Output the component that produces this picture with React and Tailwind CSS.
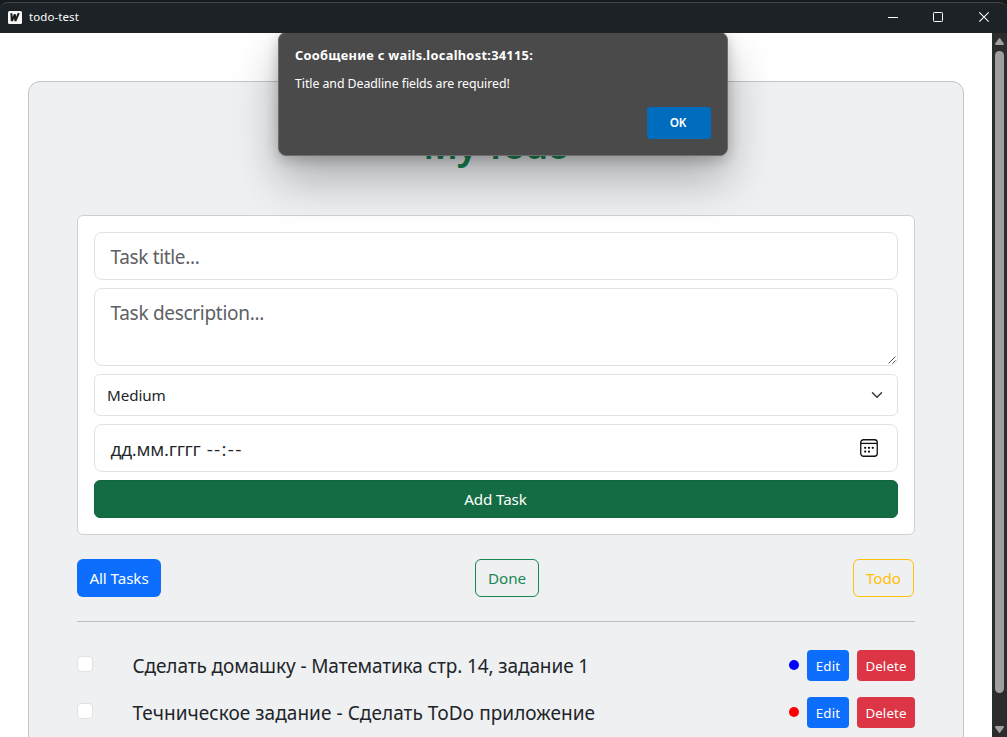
import React from "react";

const tasks = [
  { text: "Сделать домашку - Математика стр. 14, задание 1", dot: "bg-[#0000ff]", tracking: "tracking-[-0.1px]" },
  { text: "Течническое задание - Сделать ToDo приложение", dot: "bg-[#ff0000]", tracking: "tracking-[0.05px]" },
];

function TitleBar() {
  return (
    <header className="h-[33px] shrink-0 bg-[#18191a] pt-[2px]">
      <div className="flex h-[31px] items-center justify-between rounded-t-lg border-t border-[#434648] bg-[#1c2225] text-white">
        <div className="flex items-center pb-0.5 pl-2">
          <svg width="14" height="13" viewBox="0 0 14 13" className="mr-[7px]">
            <rect width="14" height="13" rx="1.5" fill="#f7f7f7" />
            <path
              d="M3.4 2.2L3.8 10L6.9 3.4L7.3 10L10.8 2.2"
              fill="none"
              stroke="#1b1b1b"
              strokeWidth="2"
              strokeLinejoin="bevel"
            />
          </svg>
          <span className="text-[11.5px] leading-4 tracking-[0.08px]">todo-test</span>
        </div>
        <div className="flex items-center pr-[18px] pb-0.5">
          <svg width="101" height="12" viewBox="0 0 101 12" fill="none" stroke="#fff">
            <path d="M0 6.5H10" />
            <rect x="45.5" y="1.5" width="9" height="9" rx="0.8" />
            <path d="M91.3 1.3L100.7 10.7M100.7 1.3L91.3 10.7" strokeWidth="1.1" />
          </svg>
        </div>
      </div>
    </header>
  );
}

function AlertDialog() {
  return (
    <div
      role="alertdialog"
      className="absolute top-[-1px] left-[278px] flex h-[124px] w-[450px] flex-col rounded-[8px] border border-[#6c6c6c] bg-[#4a4a4a] px-4 pt-3 text-white shadow-[0_24px_46px_rgba(0,0,0,0.28),0_4px_14px_rgba(0,0,0,0.22)]"
    >
      <h2 className="text-[12.8px] leading-5 font-bold tracking-[0.3px] whitespace-nowrap">
        Сообщение с wails.localhost:34115:
      </h2>
      <p className="mt-[9px] text-[12.35px] leading-5 tracking-[-0.06px]">Title and Deadline fields are required!</p>
      <button className="mt-[13px] h-8 w-16 self-end rounded-[3px] bg-[#006cbe] pr-0.5 pb-0.5 text-[11.8px] leading-[30px] font-semibold tracking-[-0.1px]">
        OK
      </button>
    </div>
  );
}

function TaskForm() {
  return (
    <form className="mt-[32px] flex flex-col gap-2 rounded-[6px] border border-[#cfd0d1] bg-white p-4">
      <div className="flex h-12 items-center rounded-lg border border-[#dee2e6] px-[15.5px] pt-0.5 text-[19px] tracking-[-0.34px] text-[#5d6165]">
        Task title...
      </div>
      <div className="relative h-[78px] rounded-lg border border-[#dee2e6] px-[15.5px] pt-[9px] text-[19px] leading-[30px] tracking-[-0.3px] text-[#5d6165]">
        Task description...
        <svg className="absolute right-px bottom-px" width="8" height="8" viewBox="0 0 8 8" stroke="#444" strokeWidth="0.9">
          <path d="M0.5 7.5L7.5 0.5M4.5 7.5L7.5 4.5" />
        </svg>
      </div>
      <div className="flex h-[42px] items-center justify-between rounded-[6px] border border-[#dee2e6] pr-[14px] pl-3 text-[15.2px] tracking-[-0.1px] text-[#212529]">
        Medium
        <svg width="12" height="12" viewBox="0 0 16 16" fill="none" stroke="#343a40" strokeWidth="2" strokeLinecap="round" strokeLinejoin="round">
          <path d="m2 5 6 6 6-6" />
        </svg>
      </div>
      <div className="flex h-12 items-center justify-between rounded-lg border border-[#dee2e6] pr-[19px] pl-[15.5px] font-['Open_Sans','Noto_Sans',sans-serif] text-[19px] text-[#212529]">
        <span className="pt-[3px]">
          <span className="tracking-[-0.25px]">дд.мм.гггг</span>
          <span className="tracking-[1.3px]"> --:--</span>
        </span>
        <svg width="18" height="18" viewBox="0 0 18 18" fill="none" stroke="#111" strokeWidth="1.3">
          <rect x="0.75" y="0.75" width="16.5" height="16.5" rx="2.8" />
          <path d="M0.75 4.4H17.25" />
          <g fill="#111" stroke="none">
            <circle cx="5.2" cy="8.8" r="1.15" />
            <circle cx="9" cy="8.8" r="1.15" />
            <circle cx="12.8" cy="8.8" r="1.15" />
            <circle cx="5.2" cy="12.6" r="1.15" />
            <circle cx="9" cy="12.6" r="1.15" />
          </g>
        </svg>
      </div>
      <button className="h-[38px] rounded-[6px] border border-[#13653f] bg-[#146c43] pr-px text-[15.2px] tracking-[-0.12px] text-white">
        Add Task
      </button>
    </form>
  );
}

function Filters() {
  return (
    <div className="mt-6 flex justify-between pr-px text-[15.2px]">
      <button className="h-[38px] w-[84px] rounded-[6px] bg-[#0d6efd] tracking-[-0.08px] text-white">All Tasks</button>
      <button className="h-[38px] w-16 rounded-[6px] border border-[#198754] tracking-[-0.05px] text-[#198754]">Done</button>
      <button className="h-[38px] w-[61px] rounded-[6px] border border-[#ffc107] text-[#ffc107]">Todo</button>
    </div>
  );
}

function TaskRow({ task }) {
  return (
    <li className="flex h-[31px] items-center">
      <span className="mb-[3px] size-4 rounded-[4px] border border-[#dee2e6] bg-white" />
      <span className={`ml-[39.5px] flex-1 pt-0.5 text-[19px] whitespace-nowrap text-[#212529] ${task.tracking}`}>{task.text}</span>
      <span className={`mr-2 mb-px size-[10px] rounded-full ${task.dot}`} />
      <button className="mr-2 h-[31px] w-[42px] rounded-[4px] bg-[#0d6efd] pt-0.5 text-[13.3px] tracking-[0.2px] text-white">Edit</button>
      <button className="h-[31px] w-[58px] rounded-[4px] bg-[#dc3545] pt-0.5 text-[13.3px] tracking-[0.1px] text-white">Delete</button>
    </li>
  );
}

function Scrollbar() {
  return (
    <div className="flex w-[15px] shrink-0 flex-col items-center bg-[#2c2c2c] pt-[5px] pb-[4px]">
      <svg width="9" height="7" viewBox="0 0 9 7" fill="#9f9f9f">
        <path d="M3.8 0.4Q4.5 -0.3 5.2 0.4L8.8 5.6Q9.2 7 8 7H1Q-0.2 7 0.2 5.6Z" />
      </svg>
      <div className="mt-[6px] h-[642px] w-[9px] rounded-full bg-[#9f9f9f]" />
      <svg className="mt-auto" width="9" height="7" viewBox="0 0 9 7" fill="#9f9f9f">
        <path d="M3.8 6.6Q4.5 7.3 5.2 6.6L8.8 1.4Q9.2 0 8 0H1Q-0.2 0 0.2 1.4Z" />
      </svg>
    </div>
  );
}

export default function App() {
  return (
    <div className="flex h-[737px] w-[1007px] flex-col overflow-hidden bg-white font-['Noto_Sans','Open_Sans',sans-serif]">
      <TitleBar />
      <div className="relative flex min-h-0 flex-1 overflow-hidden">
        <main className="min-w-0 flex-1 overflow-hidden px-7 pt-12">
          <section className="h-[760px] rounded-[12px] border border-[#c3c5c7] bg-[#eff0f2] px-12 pt-[30px]">
            <h1 className="h-[71px] text-center text-[38px] leading-[64px] font-semibold tracking-[-1.4px] text-[#198754]">
              My Todo
            </h1>
            <TaskForm />
            <Filters />
            <hr className="mt-6 border-[#bbbdbf]" />
            <ul className="mt-7 flex flex-col gap-4">
              {tasks.map((task) => (
                <TaskRow key={task.text} task={task} />
              ))}
            </ul>
          </section>
        </main>
        <Scrollbar />
        <AlertDialog />
      </div>
    </div>
  );
}
